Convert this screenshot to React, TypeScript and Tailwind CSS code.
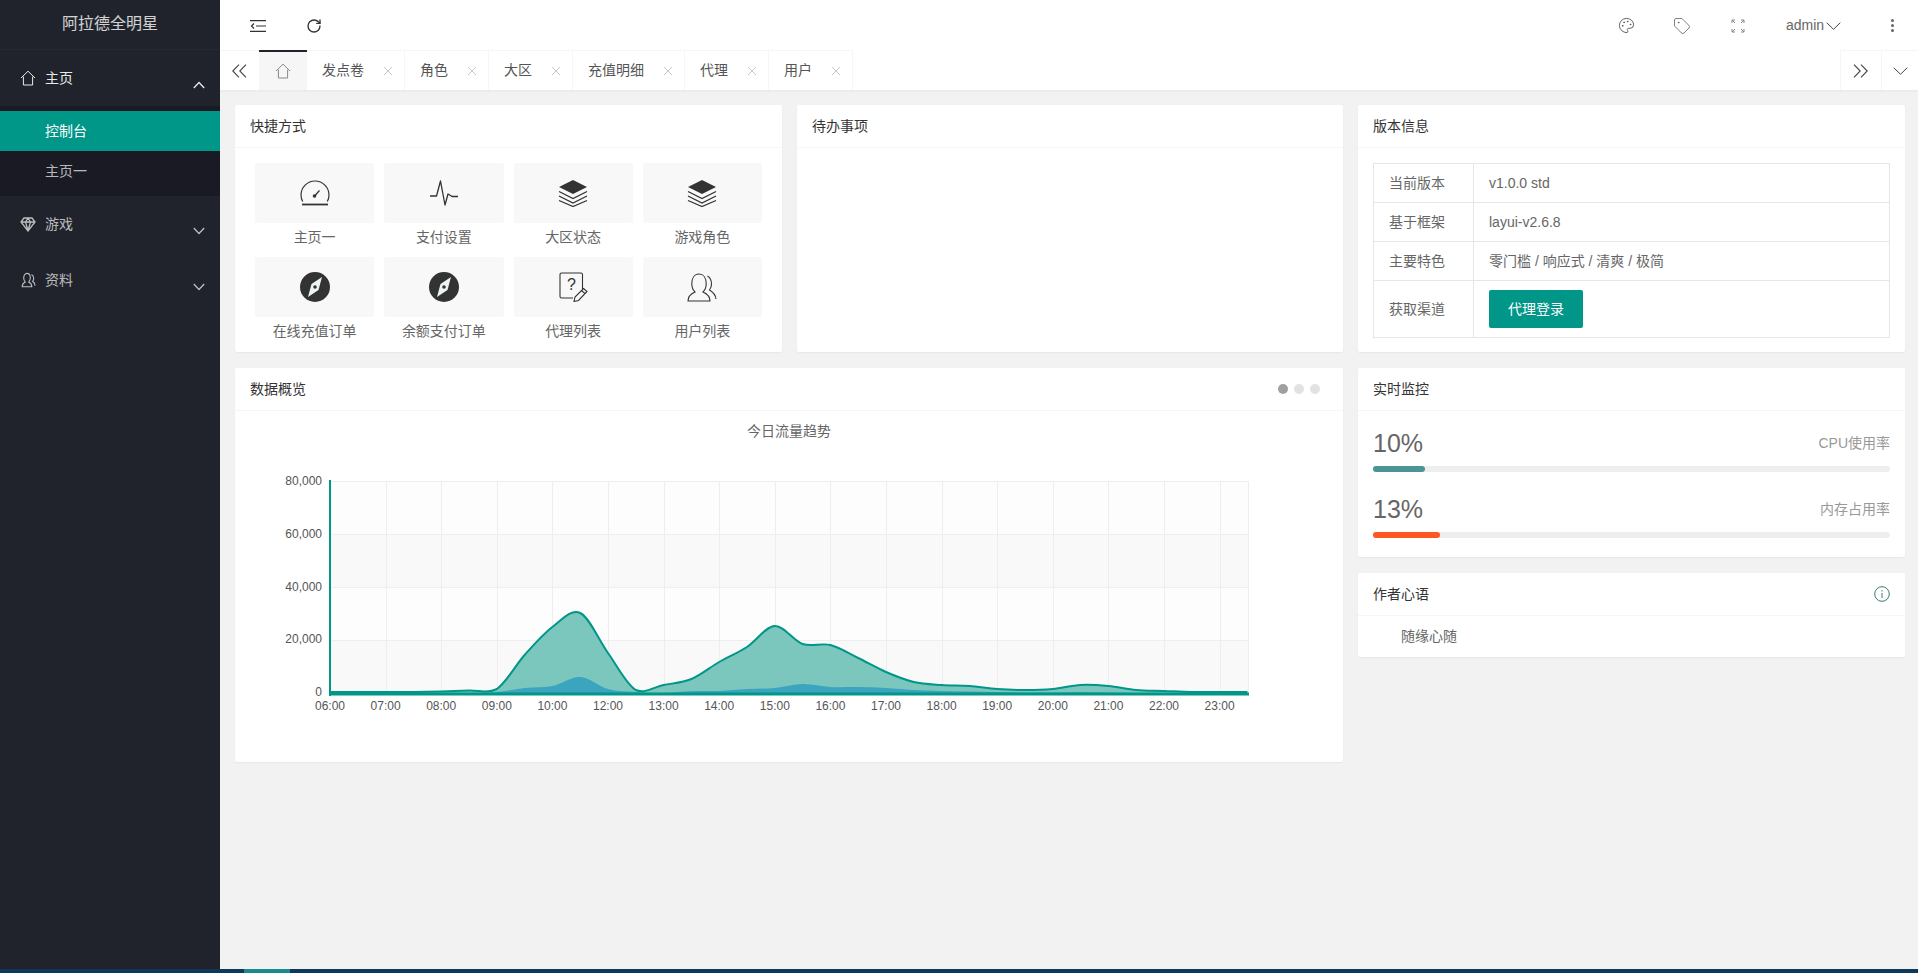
import { Palette, Tag, RotateCw } from "lucide-react";
import type { ReactNode } from "react";

const tabs = [
  { name: "发点卷", w: "w-[98px]" },
  { name: "角色", w: "w-[84px]" },
  { name: "大区", w: "w-[84px]" },
  { name: "充值明细", w: "w-[112px]" },
  { name: "代理", w: "w-[84px]" },
  { name: "用户", w: "w-[84px]" },
];

const versionRows = [
  ["当前版本", "v1.0.0 std"],
  ["基于框架", "layui-v2.6.8"],
  ["主要特色", "零门槛 / 响应式 / 清爽 / 极简"],
];

function HomeIcon({ className }: { className?: string }) {
  return (
    <svg viewBox="0 0 16 16" fill="none" stroke="currentColor" strokeWidth="1" className={className}>
      <path d="M1 8 8 1.2 15 8M3.4 6.6V15h9.2V6.6" />
    </svg>
  );
}

function DiamondIcon() {
  return (
    <svg viewBox="0 0 16 16" fill="none" stroke="currentColor" strokeWidth="1.3" className="w-4 h-4">
      <path d="M4 2h8l3 4-7 9-7-9zM1 6h14M5.5 6 8 14.5 10.5 6 8 2.2 5.5 6" />
    </svg>
  );
}

function UserIcon() {
  return (
    <svg viewBox="0 0 16 16" fill="none" stroke="currentColor" strokeWidth="1.1" className="w-4 h-4">
      <path d="M5.2 10c-1-1-1.5-2.300-1.500-4 0-2.500 1.300-4.600 3.300-4.600s3.300 2.100 3.300 4.600c0 1.700-.5 3-1.500 4 1.600.8 3 1.700 3 4.700H2.200c0-3 1.400-3.900 3-4.700zM11.500 2.500c1.500.8 2.200 2.200 2.200 3.800 0 1.200-.3 2.300-1 3.100 1.200.6 2.300 1.700 2.300 4.300" />
    </svg>
  );
}

function Chevron({ up, className }: { up?: boolean; className?: string }) {
  return (
    <svg viewBox="0 0 12 8" fill="none" stroke="currentColor" strokeWidth="1.3" className={className}>
      <path d={up ? "M.8 7 6 1.500 11.200 7" : "M.8 1 6 6.500 11.200 1"} />
    </svg>
  );
}

function CloseIcon() {
  return (
    <svg viewBox="0 0 10 10" stroke="#c9c9c9" strokeWidth="1" className="w-[10px] h-[10px]">
      <path d="M1 1l8 8M9 1 1 9" />
    </svg>
  );
}

function NavGroup({ icon, label, open, children }: { icon: ReactNode; label: string; open?: boolean; children?: ReactNode }) {
  return (
    <div>
      <div className={`flex items-center h-[56px] pl-[20px] pr-[15px] text-[14px] ${open ? "text-white/90" : "text-white/70"}`}>
        <span className="w-[16px] mr-[9px] flex justify-center">{icon}</span>
        <span>{label}</span>
        <Chevron up={open} className="ml-auto mt-[14px] w-[12px] h-[8px]" />
      </div>
      {children}
    </div>
  );
}

function Card({ title, extra, className, children }: { title: string; extra?: ReactNode; className?: string; children?: ReactNode }) {
  return (
    <div className={`bg-white rounded-[2px] shadow-[0_1px_2px_rgba(0,0,0,0.05)] ${className ?? ""}`}>
      <div className="h-[43px] px-[15px] flex items-center justify-between border-b border-[#f6f6f6] text-[14px] text-[#333]">
        <span>{title}</span>
        {extra}
      </div>
      {children}
    </div>
  );
}

function GaugeIcon() {
  return (
    <svg viewBox="0 0 30 26" fill="none" stroke="#333" className="w-[30px] h-[26px]">
      <path strokeWidth="1.2" d="M2.700 22.500A13.800 13.800 0 0 1 1 16 14 14 0 0 1 29 16a13.800 13.800 0 0 1-1.700 6.500" transform="translate(0 -1)" />
      <path strokeWidth="1.800" d="M2 24.500h26" />
      <path strokeWidth="1.200" d="M15 15.500l4.500-5" />
      <circle cx="14.500" cy="16" r="1.800" fill="#333" stroke="none" />
    </svg>
  );
}

function PulseIcon() {
  return (
    <svg viewBox="0 0 28 26" fill="none" stroke="#333" strokeWidth="1.300" strokeLinejoin="round" className="w-[28px] h-[26px]">
      <path d="M0 16h6.500L10.500 1 15 25 18 14 20.500 15.500 22 16.500H28" />
    </svg>
  );
}

function LayersIcon() {
  return (
    <svg viewBox="0 0 30 28" fill="none" stroke="#333" strokeWidth="1.300" className="w-[30px] h-[28px]">
      <path d="M15 1 29 8 15 15 1 8z" fill="#333" stroke="none" />
      <path d="M1 12.500l14 7 14-7M1 17l14 7 14-7M1 21.500l14 6 14-6" />
    </svg>
  );
}

function CompassIcon() {
  return (
    <svg viewBox="0 0 30 30" className="w-[30px] h-[30px]">
      <circle cx="15" cy="15" r="15" fill="#333" />
      <path d="M22 5 18.500 18 8 25 11.500 12z" fill="#eef4f6" />
      <circle cx="15" cy="15" r="1.800" fill="#333" />
    </svg>
  );
}

function QuestionIcon() {
  return (
    <svg viewBox="0 0 29 30" fill="none" stroke="#333" strokeWidth="1.100" className="w-[29px] h-[30px]">
      <path d="M14 26H2.500c-1 0-1.500-.5-1.500-1.500V2.500C1 1.500 1.500 1 2.500 1H22c1 0 1.500.5 1.500 1.500V17" />
      <text x="8" y="18" fontSize="16" fill="#333" stroke="none">?</text>
      <path d="M24.500 16.500l3.500 3-8.500 9-4.500 1 1-4.500zM22.500 18.500l3.500 3.200" />
    </svg>
  );
}

function UsersIcon() {
  return (
    <svg viewBox="0 0 30 29" fill="none" stroke="#333" strokeWidth="1.100" className="w-[30px] h-[29px]">
      <path d="M1 28c0-5 2.500-7 7-9-2-2-3.200-4.500-3.200-8C4.800 5 7.500 1 12 1s7.200 4 7.200 10c0 3.500-1.200 6-3.200 8 4.500 2 7 4 7 9z" />
      <path d="M20.500 3c2.500 1.500 4 4.500 4 8 0 2.500-.8 4.500-2 6 3.500 2 6 5 6.500 9" />
    </svg>
  );
}

const shortcuts: { label: string; icon: ReactNode }[] = [
  { label: "主页一", icon: <GaugeIcon /> },
  { label: "支付设置", icon: <PulseIcon /> },
  { label: "大区状态", icon: <LayersIcon /> },
  { label: "游戏角色", icon: <LayersIcon /> },
  { label: "在线充值订单", icon: <CompassIcon /> },
  { label: "余额支付订单", icon: <CompassIcon /> },
  { label: "代理列表", icon: <QuestionIcon /> },
  { label: "用户列表", icon: <UsersIcon /> },
];

// half hour steps, y in page px read off the picture
const X0 = 330;
const STEP = 27.8;
const BASE = 694;
const teal = [692, 692, 692, 692, 691.500, 690.500, 689, 655, 627, 613, 653, 690, 685, 679, 662, 647, 626, 644, 645, 658, 672, 682, 685, 686, 689, 690, 689, 685, 686, 690, 691, 692, 692, 692];
const blue = [693, 693, 693, 693, 693, 693, 692, 688, 686, 677, 689, 692, 693, 691, 691, 689, 688, 684, 687, 687, 688, 690, 691, 691.500, 692, 692.500, 692.500, 692, 692.500, 693, 693, 693, 693, 693];

function smooth(ys: number[]) {
  const pts = ys.map((y, i) => [X0 + i * STEP, y]);
  let d = `M${pts[0][0]} ${pts[0][1]}`;
  for (let i = 0; i < pts.length - 1; i++) {
    const p0 = pts[Math.max(i - 1, 0)];
    const p1 = pts[i];
    const p2 = pts[i + 1];
    const p3 = pts[Math.min(i + 2, pts.length - 1)];
    const c1y = Math.min(BASE, p1[1] + (p2[1] - p0[1]) / 6);
    const c2y = Math.min(BASE, p2[1] - (p3[1] - p1[1]) / 6);
    d += ` C${p1[0] + STEP / 3} ${c1y} ${p2[0] - STEP / 3} ${c2y} ${p2[0]} ${p2[1]}`;
  }
  return d;
}

function fillPath(ys: number[]) {
  const last = X0 + (ys.length - 1) * STEP;
  return `${smooth(ys)} L${last} ${BASE} L${X0} ${BASE} Z`;
}

const hours = ["06:00", "07:00", "08:00", "09:00", "10:00", "12:00", "13:00", "14:00", "15:00", "16:00", "17:00", "18:00", "19:00", "20:00", "21:00", "22:00", "23:00"];
const yLabels = ["80,000", "60,000", "40,000", "20,000", "0"];

function TrafficChart() {
  const xEnd = 1249;
  return (
    <svg viewBox="235 411 1108 351" className="block w-[1108px] h-[351px]">
      <text x="789" y="436" textAnchor="middle" fontSize="14" fill="#666">今日流量趋势</text>
      <rect x={X0} y="481" width={xEnd - X0} height="53" fill="#fdfdfd" />
      <rect x={X0} y="534" width={xEnd - X0} height="53" fill="#f9f9f9" />
      <rect x={X0} y="587" width={xEnd - X0} height="53" fill="#fdfdfd" />
      <rect x={X0} y="640" width={xEnd - X0} height="54" fill="#f9f9f9" />
      {[481.500, 534.500, 587.500, 640.500].map((y) => (
        <line key={y} x1={X0} x2={xEnd} y1={y} y2={y} stroke="#eee" />
      ))}
      {hours.map((h, i) => {
        const x = Math.round(X0 + i * 55.6) + 0.5;
        return i > 0 ? <line key={h} x1={x} x2={x} y1="481" y2="694" stroke="#eee" /> : null;
      })}
      <line x1={xEnd - 0.5} x2={xEnd - 0.5} y1="481" y2="694" stroke="#eee" />
      <path d={fillPath(teal)} fill="#7cc7bd" />
      <path d={fillPath(blue)} fill="#3ba5bf" />
      <path d={smooth(teal)} fill="none" stroke="#009688" strokeWidth="2" />
      <line x1={X0} x2={xEnd} y1="694" y2="694" stroke="#009688" strokeWidth="3" />
      <line x1={X0} x2={X0} y1="480" y2="696" stroke="#009688" strokeWidth="2" />
      {yLabels.map((t, i) => (
        <text key={t} x="322" y={485 + i * 52.8} textAnchor="end" fontSize="12" fill="#555">{t}</text>
      ))}
      {hours.map((h, i) => (
        <text key={h} x={X0 + i * 55.6} y="710" textAnchor="middle" fontSize="12" fill="#555">{h}</text>
      ))}
    </svg>
  );
}

function Meter({ value, label, fill, w }: { value: string; label: string; fill: string; w: string }) {
  return (
    <div>
      <div className="flex items-center justify-between h-[24px]">
        <span className="pt-[2px] text-[25px] text-[#666]">{value}</span>
        <span className="text-[14px] text-[#999]">{label}</span>
      </div>
      <div className="mt-[11px] h-[6px] rounded-[3px] bg-[#eeeeee]">
        <div className={`h-[6px] rounded-[3px] ${fill} ${w}`} />
      </div>
    </div>
  );
}

export default function App() {
  return (
    <div className="w-[1918px] h-[973px] overflow-hidden flex flex-col bg-[#f2f2f2] [font-family:'Liberation_Sans','Noto_Sans_CJK_SC',sans-serif]">
      <div className="flex flex-1 min-h-0">
        {/* Sidebar */}
        <aside className="w-[220px] shrink-0 bg-[#20232b]">
          <div className="h-[50px] flex items-center justify-center pb-[2px] text-[16px] text-white/80 border-b border-dotted border-[#2c2f37]">
            阿拉德全明星
          </div>
          <NavGroup icon={<HomeIcon className="w-4 h-4" />} label="主页" open>
            <div className="bg-[#191a23] py-[5px] text-[14px]">
              <div className="h-[40px] pl-[45px] flex items-center bg-[#009688] text-white">控制台</div>
              <div className="h-[40px] pl-[45px] flex items-center text-white/70">主页一</div>
            </div>
          </NavGroup>
          <NavGroup icon={<DiamondIcon />} label="游戏" />
          <NavGroup icon={<UserIcon />} label="资料" />
        </aside>

        <div className="flex-1 min-w-0 flex flex-col">
          {/* Header */}
          <header className="h-[50px] shrink-0 pt-[1px] flex items-center bg-white text-[#444]">
            <div className="ml-[10px] w-[56px] flex justify-center">
              <svg viewBox="0 0 16 12" fill="none" stroke="#333" strokeWidth="1.200" className="w-[16px] h-[12px]">
                <path d="M0 .7h16M0 11.300h16M6 6h10M4 3.500 1.500 6 4 8.500" />
              </svg>
            </div>
            <div className="w-[56px] flex justify-center">
              <RotateCw size={16} strokeWidth={2} color="#333" />
            </div>
            <div className="ml-auto flex items-center text-[14px] text-[#666]">
              <div className="w-[56px] flex justify-center"><Palette size={17} strokeWidth={1.300} color="#555" /></div>
              <div className="w-[56px] flex justify-center"><Tag size={18} strokeWidth={1} color="#555" /></div>
              <div className="w-[56px] flex justify-center">
                <svg viewBox="0 0 14 14" fill="none" stroke="#888" strokeWidth="1" className="w-[14px] h-[14px]">
                  <path d="M1 4V1h3M1 1l3 3M13 4V1h-3M13 1l-3 3M1 10v3h3M1 13l3-3M13 10v3h-3M13 13l-3-3" />
                </svg>
              </div>
              <div className="w-[100px] pl-[20px] flex items-center">
                <span>admin</span>
                <svg viewBox="0 0 15 8" fill="none" stroke="#444" strokeWidth="1" className="ml-[2px] w-[15px] h-[8px]">
                  <path d="M.7.7 7.500 7.300 14.300.7" />
                </svg>
              </div>
              <div className="w-[52px] flex flex-col items-center gap-[2px]">
                <span className="w-[3px] h-[3px] rounded-full bg-[#666]" />
                <span className="w-[3px] h-[3px] rounded-full bg-[#666]" />
                <span className="w-[3px] h-[3px] rounded-full bg-[#666]" />
              </div>
            </div>
          </header>

          {/* Tabs */}
          <div className="h-[42px] shrink-0 flex bg-white border-b-2 border-[#ececec] text-[14px] text-[#555]">
            <div className="w-[39px] flex items-center justify-center border-t border-[#f6f6f6]">
              <svg viewBox="0 0 15 14" fill="none" stroke="#444" strokeWidth="1.100" className="w-[15px] h-[14px]">
                <path d="M7 .7.8 7 7 13.300M14 .7 7.800 7 14 13.300" />
              </svg>
            </div>
            <div className="w-[48px] flex items-center justify-center bg-[#f6f6f6] border-t-2 border-[#20222a] text-[#888]">
              <HomeIcon className="w-4 h-4" />
            </div>
            {tabs.map((t) => (
              <div key={t.name} className={`${t.w} flex items-center justify-between pl-[15px] pr-[11px] border-t border-r border-[#f6f6f6]`}>
                <span>{t.name}</span>
                <CloseIcon />
              </div>
            ))}
            <div className="ml-auto w-[41px] pr-[2px] flex items-center justify-center border-t border-l border-[#f6f6f6]">
              <svg viewBox="0 0 15 14" fill="none" stroke="#444" strokeWidth="1.100" className="w-[15px] h-[14px]">
                <path d="M1 .7 7.200 7 1 13.300M8 .7 14.200 7 8 13.300" />
              </svg>
            </div>
            <div className="w-[37px] flex items-center justify-center border-t border-l border-[#f6f6f6]">
              <svg viewBox="0 0 15 8" fill="none" stroke="#444" strokeWidth="1" className="w-[15px] h-[8px]">
                <path d="M.7.7 7.500 7.300 14.300.7" />
              </svg>
            </div>
          </div>

          {/* Content */}
          <main className="flex-1 pl-[15px] pt-[13px] grid grid-cols-[547px_546px_547px] gap-x-[15px] gap-y-[16px] content-start">
            <Card title="快捷方式" className="h-[247px]">
              <div className="px-[20px] pt-[15px] grid grid-cols-4 gap-x-[10px] gap-y-[6px]">
                {shortcuts.map((s) => (
                  <div key={s.label}>
                    <div className="h-[60px] flex items-center justify-center rounded-[2px] bg-[#f8f8f8]">{s.icon}</div>
                    <div className="h-[28px] flex items-center justify-center text-[14px] text-[#666]">{s.label}</div>
                  </div>
                ))}
              </div>
            </Card>

            <Card title="待办事项" className="h-[247px]" />

            <Card title="版本信息" className="h-[247px]">
              <div className="p-[15px]">
                <table className="w-full border-collapse text-[14px] text-[#666]">
                  <tbody>
                    {versionRows.map(([k, v]) => (
                      <tr key={k} className="h-[39px]">
                        <td className="w-[100px] px-[15px] border border-[#e6e6e6]">{k}</td>
                        <td className="px-[15px] border border-[#e6e6e6]">{v}</td>
                      </tr>
                    ))}
                    <tr className="h-[57px]">
                      <td className="px-[15px] border border-[#e6e6e6]">获取渠道</td>
                      <td className="px-[15px] border border-[#e6e6e6]">
                        <div className="w-[94px] h-[38px] flex items-center justify-center rounded-[2px] bg-[#009688] text-white">代理登录</div>
                      </td>
                    </tr>
                  </tbody>
                </table>
              </div>
            </Card>

            <Card
              title="数据概览"
              className="col-span-2 h-[394px]"
              extra={
                <div className="flex gap-[6px] mr-[8px]">
                  <span className="w-[10px] h-[10px] rounded-full bg-[#a0a0a0]" />
                  <span className="w-[10px] h-[10px] rounded-full bg-[#e2e2e2]" />
                  <span className="w-[10px] h-[10px] rounded-full bg-[#e2e2e2]" />
                </div>
              }
            >
              <TrafficChart />
            </Card>

            <div className="flex flex-col gap-[16px]">
              <Card title="实时监控" className="h-[189px]">
                <div className="px-[15px] pt-[20px] flex flex-col gap-[25px]">
                  <Meter value="10%" label="CPU使用率" fill="bg-[#4b9596]" w="w-[10%]" />
                  <Meter value="13%" label="内存占用率" fill="bg-[#ff5722]" w="w-[13%]" />
                </div>
              </Card>
              <Card
                title="作者心语"
                className="h-[84px]"
                extra={
                  <svg viewBox="0 0 16 16" fill="none" stroke="#3a7a70" strokeWidth="1" className="w-[16px] h-[16px]">
                    <circle cx="8" cy="8" r="7.300" />
                    <path d="M8 7v5M8 4.200v1.300" />
                  </svg>
                }
              >
                <div className="px-[15px] indent-[28px] text-[14px] leading-[41px] text-[#666]">随缘心随</div>
              </Card>
            </div>
          </main>
        </div>
      </div>

      {/* Bottom strip */}
      <div className="h-[4px] shrink-0 bg-[#0d3a5c]">
        <div className="ml-[244px] w-[46px] h-[4px] bg-[#1b8a8c]" />
      </div>
    </div>
  );
}
